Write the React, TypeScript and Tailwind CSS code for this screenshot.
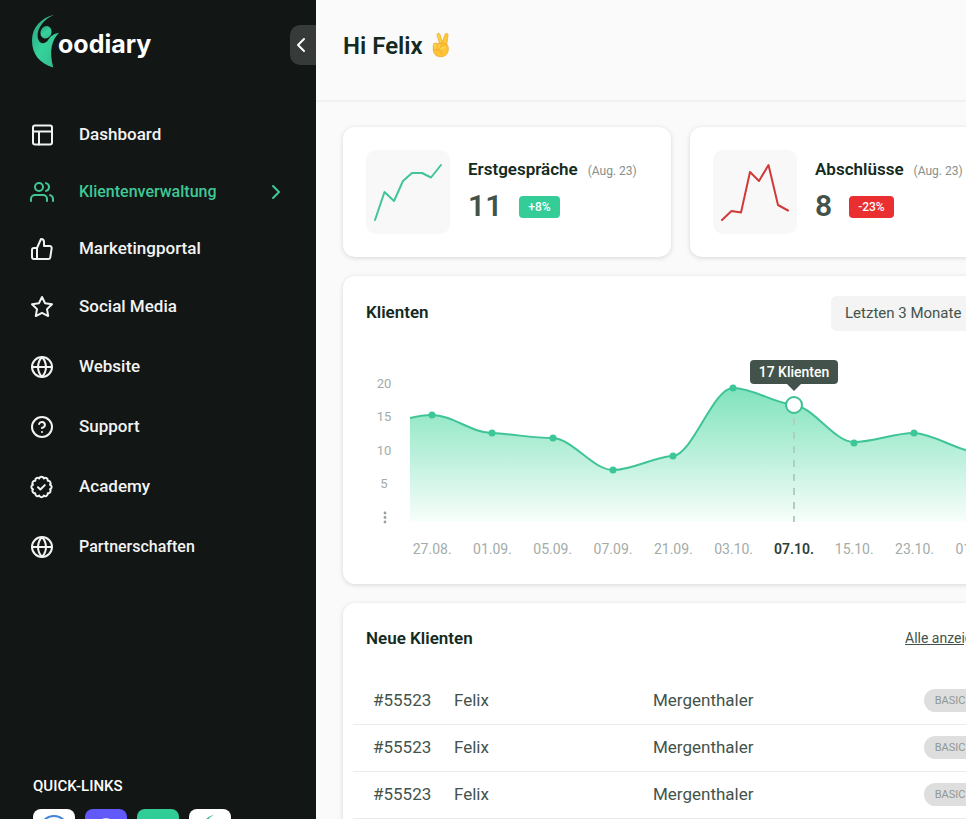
import type { ReactNode } from "react";
import { FiChevronLeft, FiChevronRight, FiHelpCircle, FiStar, FiThumbsUp, FiUsers } from "react-icons/fi";

const stroke = {
  fill: "none",
  stroke: "currentColor",
  strokeWidth: 2,
  strokeLinecap: "round" as const,
  strokeLinejoin: "round" as const,
};

function LayoutIcon() {
  return (
    <svg viewBox="0 0 24 24" className="size-6" {...stroke} aria-hidden="true">
      <rect x="3" y="2.500" width="19" height="19" rx="2" />
      <path d="M3 8.500h19M9 8.500v13" />
    </svg>
  );
}

function GlobeIcon() {
  return (
    <svg viewBox="0 0 24 24" className="size-6" {...stroke} aria-hidden="true">
      <circle cx="12" cy="12" r="10" />
      <path d="M2 12h20M12 2a15.3 15.3 0 0 1 4 10 15.3 15.3 0 0 1-4 10 15.3 15.3 0 0 1-4-10 15.3 15.3 0 0 1 4-10z" />
    </svg>
  );
}

function sealPath(lobes: number, inner: number, bump: number) {
  const at = (i: number) => {
    const a = ((i + 0.5) / lobes) * Math.PI * 2 - Math.PI / 2;
    return `${(11.5 + inner * Math.cos(a)).toFixed(2)} ${(12 + inner * Math.sin(a)).toFixed(2)}`;
  };
  let d = `M${at(0)}`;
  for (let i = 1; i <= lobes; i++) d += `A${bump} ${bump} 0 0 1 ${at(i)}`;
  return d + "Z";
}

function SealIcon() {
  return (
    <svg viewBox="0 0 24 24" className="size-6" {...stroke} aria-hidden="true">
      <path d={sealPath(12, 8.8, 2.4)} />
      <path d="M8 12.300l2.400 2.200 4.400-4.400" />
    </svg>
  );
}

function Figure({ className, id }: { className: string; id: string }) {
  return (
    <svg viewBox="0 0 30 56" className={className} aria-hidden="true">
      <defs>
        <linearGradient id={id} x1="0" y1="0" x2="1" y2="1">
          <stop offset="0" stopColor="#2a9d7c" />
          <stop offset="0.5" stopColor="#35d39c" />
          <stop offset="1" stopColor="#35b58b" />
        </linearGradient>
      </defs>
      <g fill={`url(#${id})`}>
        <path d="M23 0C9 4 0 13 0 27C0 41 8 51 22 55C20 47 19 40 20.500 33C22 27 24 23 28 19C22 20 19 23 17 26C14 31 9 31 7 27C3 18 10 6 23 0Z" />
        <ellipse cx="14.500" cy="18.500" rx="5.600" ry="6.600" transform="rotate(20 14.5 18.5)" />
      </g>
    </svg>
  );
}

function VictoryHand() {
  return (
    <svg viewBox="0 0 18 26" className="h-[26px] w-5" role="img" aria-label="Victory">
      <g stroke="#e59a1c" strokeWidth="0.6" strokeLinejoin="round">
        <path d="M8 13L5 3.200C4.700 1 7.300.6 8 2.600L11 12z" fill="#ffd145" />
        <path d="M9.500 12L13 2.400C13.800.6 16.500 1.300 16 3.400L14.500 14z" fill="#ffc83a" />
        <path d="M2 14c2-3 11-4 13.500-1 1.500 3 1 7-1 9.500-2.500 3-9 3-11.500 0C1 20 .8 16.500 2 14z" fill="#ffc436" />
        <rect x="1.300" y="11" width="4.200" height="7" rx="2.100" fill="#ffcf48" />
        <rect x="5" y="11.500" width="4.200" height="7" rx="2.100" fill="#ffcf48" />
        <path d="M14.500 13.500c-2-1.500-7 1.500-7.500 3.500-.3 1.800 1.500 2.300 3 1.500 0 1.500-.6 2.500-1.500 3.500" fill="#ffcf48" />
      </g>
    </svg>
  );
}

function NavItem({ icon, label, active, tall, compact }: {
  icon: ReactNode;
  label: string;
  active?: boolean;
  tall?: boolean;
  compact?: boolean;
}) {
  return (
    <li>
      <a
        href="#"
        className={`flex items-center pl-[30px] pr-7 font-medium ${compact ? "text-base" : "text-[17px]"} ${tall ? "h-[60px]" : "h-[57px]"} ${active ? "text-[#40c795]" : "text-[#f2f3f3]"}`}
      >
        <span className="w-[49px] text-2xl">{icon}</span>
        <span className="flex-1">{label}</span>
        {active && <FiChevronRight className="text-2xl" />}
      </a>
    </li>
  );
}

function Sidebar() {
  return (
    <aside className="h-full w-[316px] shrink-0 overflow-hidden bg-[#121615]">
      <div className="flex h-[106px] items-start justify-between">
        <a href="#" className="flex pl-8 pt-3.5" aria-label="oodiary">
          <Figure id="brand" className="h-[55px] w-[29px]" />
          <span className="-ml-[3px] pt-3.5 font-['Inter',sans-serif] text-[25px] leading-8 font-bold text-white">oodiary</span>
        </a>
        <button
          type="button"
          aria-label="Menü einklappen"
          className="mt-[25px] flex h-10 w-[26px] items-center justify-center rounded-l-[10px] bg-[#363a39] pr-1 text-white"
        >
          <FiChevronLeft className="size-6 shrink-0" />
        </button>
      </div>
      <nav>
        <ul>
          <NavItem icon={<LayoutIcon />} label="Dashboard" />
          <NavItem icon={<FiUsers />} label="Klientenverwaltung" active compact />
          <NavItem icon={<FiThumbsUp />} label="Marketingportal" />
          <NavItem icon={<FiStar />} label="Social Media" tall />
          <NavItem icon={<GlobeIcon />} label="Website" tall />
          <NavItem icon={<FiHelpCircle />} label="Support" tall />
          <NavItem icon={<SealIcon />} label="Academy" tall />
          <NavItem icon={<GlobeIcon />} label="Partnerschaften" tall compact />
        </ul>
      </nav>
      <section className="mt-[199px] pl-[33px]">
        <h2 className="text-[15px] leading-5 font-medium text-white">QUICK-LINKS</h2>
        <div className="mt-[13px] flex gap-2.5">
          <a href="#" aria-label="Browser" className="size-[42px] rounded-lg bg-white pt-1.5">
            <svg viewBox="0 0 42 36" className="w-full" aria-hidden="true">
              <circle cx="21" cy="15" r="14" fill="none" stroke="#4285d6" strokeWidth="2" />
              <circle cx="21" cy="15" r="11" fill="#78b4ee" />
            </svg>
          </a>
          <a href="#" aria-label="Profil" className="size-[42px] rounded-lg bg-[#6259fb] pt-[9px]">
            <svg viewBox="0 0 42 32" className="w-full" aria-hidden="true">
              <circle cx="21" cy="8" r="8" fill="#d9d5ff" />
            </svg>
          </a>
          <a href="#" aria-label="Nachrichten" className="size-[42px] rounded-lg bg-[#30cd97]" />
          <a href="#" aria-label="oodiary Website" className="flex size-[42px] justify-center rounded-lg bg-white pt-[5px]">
            <Figure id="brand-small" className="h-8 w-[17px]" />
          </a>
        </div>
      </section>
    </aside>
  );
}

function StatCard({ title, value, change, color, badge, points }: {
  title: string;
  value: string;
  change: string;
  color: string;
  badge: string;
  points: string;
}) {
  return (
    <article className="flex h-[130px] w-[328px] items-center gap-[18px] rounded-xl bg-white px-[23px] shadow-[0_1px_5px_rgba(0,0,0,0.14)]">
      <svg viewBox="0 0 84 84" className="size-[84px] shrink-0 rounded-[10px] bg-[#f8f8f8]" aria-hidden="true">
        <polyline points={points} fill="none" stroke={color} strokeWidth="2" strokeLinejoin="round" strokeLinecap="round" />
      </svg>
      <div className="pb-0.5">
        <div className="flex items-baseline gap-2.5">
          <h2 className="text-[17px] leading-5 font-semibold text-[#132a20]">{title}</h2>
          <span className="text-xs leading-5 whitespace-nowrap text-[#86908c]">(Aug. 23)</span>
        </div>
        <div className="mt-[7px] flex items-center gap-[17px]">
          <strong className="text-[30px] leading-9 font-semibold text-[#43534b]">{value}</strong>
          <span className={`mt-0.5 rounded px-[9px] text-xs leading-[22px] font-medium text-white ${badge}`}>{change}</span>
        </div>
      </div>
    </article>
  );
}

const line =
  "M0 67C8 65 15 64 22 64C42 64 62 82 82 82C102 83 123 87 143 87C163 88 183 119 203 119C223 119 243 106 263 105C283 103 303 37 323 37C343 37 363 52 384 54C404 56 424 91 444 91C464 91 484 82 504 82C522 83 540 95 556 99L585 103";

const dots = [[22, 64], [82, 82], [143, 87], [203, 119], [263, 105], [323, 37], [444, 92], [504, 82]];
const dates = ["27.08.", "01.09.", "05.09.", "07.09.", "21.09.", "03.10.", "07.10.", "15.10.", "23.10.", "01.11."];

function ClientsChart() {
  return (
    <section className="h-[308px] rounded-xl bg-white pt-5 shadow-[0_1px_5px_rgba(0,0,0,0.14)]">
      <div className="flex items-start justify-between px-[23px]">
        <h2 className="pt-1.5 text-[17px] leading-5 font-semibold text-[#132a20]">Klienten</h2>
        <select
          aria-label="Zeitraum"
          className="h-[35px] w-[164px] appearance-none rounded-md bg-[#f4f4f4] px-3.5 text-[15px] text-[#43534b]"
        >
          <option>Letzten 3 Monate</option>
        </select>
      </div>
      <div className="mt-5 flex">
        <div className="w-[67px] pt-[23px] pl-[26px] text-[13px] text-[#a3aca8]">
          <div className="flex h-[133px] w-[30px] flex-col justify-between text-center leading-5">
            {["20", "15", "10", "5"].map((n) => (
              <div key={n} className="h-[33px]">{n}</div>
            ))}
          </div>
          <svg viewBox="0 0 4 14" className="mt-1 ml-3.5 h-3.5 w-1" fill="#98a29d" aria-hidden="true">
            <circle cx="2" cy="2" r="1.400" />
            <circle cx="2" cy="6.500" r="1.400" />
            <circle cx="2" cy="11" r="1.400" />
          </svg>
        </div>
        <div className="relative">
          <svg viewBox="0 0 585 171" className="h-[171px] w-[585px]" role="img" aria-label="Klienten im Zeitverlauf">
            <defs>
              <linearGradient id="area" gradientUnits="userSpaceOnUse" x1="0" y1="36" x2="0" y2="171">
                <stop offset="0" stopColor="#7fe3bd" />
                <stop offset="0.5" stopColor="#baf0db" />
                <stop offset="1" stopColor="#f8fefb" />
              </linearGradient>
            </defs>
            <path d={`${line}V171H0Z`} fill="url(#area)" />
            <path d={line} fill="none" stroke="#3fc497" strokeWidth="2" />
            <path d="M384 67V171" stroke="#afcfc1" strokeWidth="2" strokeDasharray="7 7" />
            {dots.map(([x, y]) => (
              <circle key={x} cx={x} cy={y} r="3.500" fill="#3bc797" />
            ))}
            <circle cx="384" cy="54" r="8" fill="white" stroke="#3bbf93" strokeWidth="2" />
          </svg>
          <div className="absolute top-[9px] left-[384px] w-[88px] -translate-x-1/2 rounded bg-[#43534b] text-center text-sm leading-6 font-medium whitespace-nowrap text-white">
            17 Klienten
            <svg viewBox="0 0 14 7" className="absolute top-full left-[37px] h-[7px] w-3.5" aria-hidden="true">
              <path d="M0 0h14L7 7z" fill="#43534b" />
            </svg>
          </div>
        </div>
      </div>
      <div className="mt-3.5 mr-[13px] ml-[59px] grid grid-cols-10 text-center text-sm leading-5 text-[#a3aca8]">
        {dates.map((d) => (
          <span key={d} className={d === "07.10." ? "font-semibold text-[#2f3e37]" : ""}>{d}</span>
        ))}
      </div>
    </section>
  );
}

function NewClients() {
  return (
    <section className="rounded-xl bg-white pt-[25px] shadow-[0_1px_5px_rgba(0,0,0,0.14)]">
      <div className="flex items-center justify-between px-[23px] pb-[29px]">
        <h2 className="text-[17px] leading-5 font-semibold text-[#132a20]">Neue Klienten</h2>
        <a href="#" className="w-[90px] text-sm leading-5 text-[#43534b] underline">Alle anzeigen</a>
      </div>
      <div className="px-2.5 pb-6">
        <table className="w-full table-fixed text-[17px] text-[#43534b]">
          <tbody>
            {[0, 1, 2].map((row) => (
              <tr key={row} className="h-[47px] border-b border-[#ebebeb]">
                <td className="w-[101px] pl-5">#55523</td>
                <td className="w-[199px]">Felix</td>
                <td>Mergenthaler</td>
                <td className="w-[84px]">
                  <span className="block w-[52px] rounded-full bg-[#dedede] text-center text-[11px] leading-[23px] text-[#8f9895]">BASIC</span>
                </td>
              </tr>
            ))}
          </tbody>
        </table>
      </div>
    </section>
  );
}

export default function App() {
  return (
    <div className="flex h-screen overflow-hidden bg-white pr-1.5 font-['Roboto','Noto_Sans',sans-serif]">
      <Sidebar />
      <main className="min-w-0 flex-1 overflow-hidden bg-[#fafafa]">
        <header className="flex h-[102px] items-start gap-2 border-b-2 border-[#f1f1f1] pt-8 pl-[27px]">
          <h1 className="text-2xl leading-7 font-semibold text-[#132a20]">Hi Felix</h1>
          <VictoryHand />
        </header>
        <div className="min-w-[702px] space-y-[19px] pt-[25px] pl-[27px]">
          <div className="flex gap-[19px]">
            <StatCard title="Erstgespräche" value="11" change="+8%" color="#41c598" badge="bg-[#34cd98]" points="9,70 18.500,42 28,51 37,31 46,23 56,23 65,27.500 75,15" />
            <StatCard title="Abschlüsse" value="8" change="-23%" color="#d03a38" badge="bg-[#e92f2f]" points="9,70 18.500,61 28,62.500 37,22 46,31 55.500,15 65,55 75,60.500" />
          </div>
          <ClientsChart />
          <NewClients />
        </div>
      </main>
    </div>
  );
}
